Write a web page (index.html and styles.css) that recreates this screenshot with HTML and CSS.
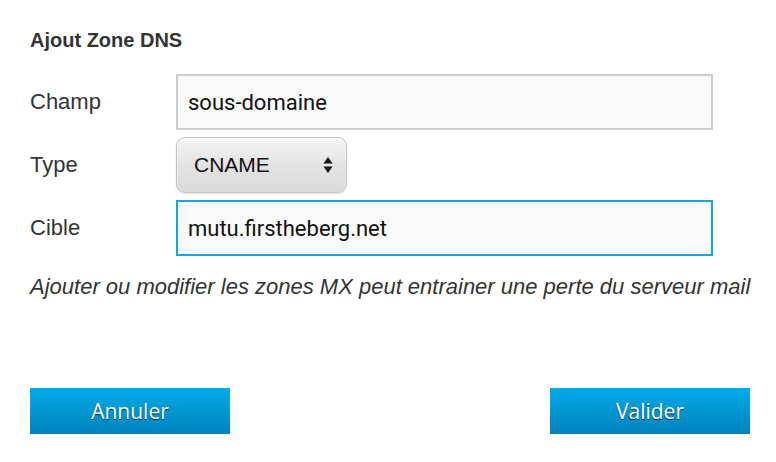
FILE: index.html
```html
<!DOCTYPE html>
<html lang="fr">
<head>
<meta charset="utf-8">
<title>Ajout Zone DNS</title>
<link rel="stylesheet" href="styles.css">
</head>
<body>
<div class="dialog">
  <h1 class="title">Ajout Zone DNS</h1>
  <div class="form">
    <label class="label">Champ</label>
    <div class="field">sous-domaine</div>
    <label class="label">Type</label>
    <div class="select">
      <span>CNAME</span>
      <svg class="arrows" width="10" height="18" viewBox="0 0 10 18"><path d="M5 1 L9.5 7.5 H0.5 Z M5 17 L9.5 10.5 H0.5 Z" fill="#111"/></svg>
    </div>
    <label class="label">Cible</label>
    <div class="field focus">mutu.firstheberg.net</div>
  </div>
  <p class="note">Ajouter ou modifier les zones MX peut entrainer une perte du serveur mail</p>
  <div class="actions">
    <button class="btn">Annuler</button>
    <button class="btn">Valider</button>
  </div>
</div>
</body>
</html>
```

FILE: styles.css
```css
html, body {
  margin: 0;
  padding: 0;
  background: #fff;
}
body {
  font-family: "Liberation Sans", Arial, sans-serif;
  color: #333;
  width: 776px;
  height: 462px;
  overflow: hidden;
}
.dialog {
  padding: 26px 20px 0 30px;
}
.title {
  margin: 0;
  font-size: 20px;
  font-weight: bold;
  line-height: 28px;
  color: #333;
}
.form {
  margin-top: 20px;
  display: grid;
  grid-template-columns: 146px 537px;
  row-gap: 7px;
  align-items: center;
}
.label {
  font-size: 22px;
  color: #333;
}
.field {
  box-sizing: border-box;
  height: 56px;
  border: 2px solid #cdcdcd;
  background: #fafafa;
  display: flex;
  align-items: center;
  padding-left: 10px;
  font-family: Roboto, "Liberation Sans", sans-serif;
  font-size: 22px;
  color: #111;
}
.field.focus {
  border-color: #14a5df;
}
.select {
  box-sizing: border-box;
  width: 171px;
  height: 56px;
  border: 1px solid #c4c4c4;
  border-radius: 9px;
  background: linear-gradient(#f4f4f4, #e2e2e2 55%, #dadada);
  box-shadow: inset 0 1px 2px rgba(255,255,255,0.9), 0 1px 2px rgba(0,0,0,0.12);
  display: flex;
  align-items: center;
  justify-content: space-between;
  padding: 0 13px 0 17px;
  font-family: "Liberation Sans", Arial, sans-serif;
  font-size: 21px;
  color: #111;
}
.arrows {
  display: block;
}
.note {
  margin: 18px 0 0 0;
  font-size: 22px;
  line-height: 26px;
  font-style: italic;
  color: #333;
  white-space: nowrap;
}
.actions {
  margin-top: 88px;
  width: 720px;
  display: flex;
  justify-content: space-between;
}
.btn {
  width: 200px;
  height: 46px;
  border: none;
  background: linear-gradient(#00abe9, #0082bb);
  color: #fff;
  font-family: "Open Sans", "Liberation Sans", sans-serif;
  font-size: 21px;
  text-shadow: 0 1px 1px rgba(0,0,0,0.7);
  padding: 0;
  cursor: pointer;
}
```
